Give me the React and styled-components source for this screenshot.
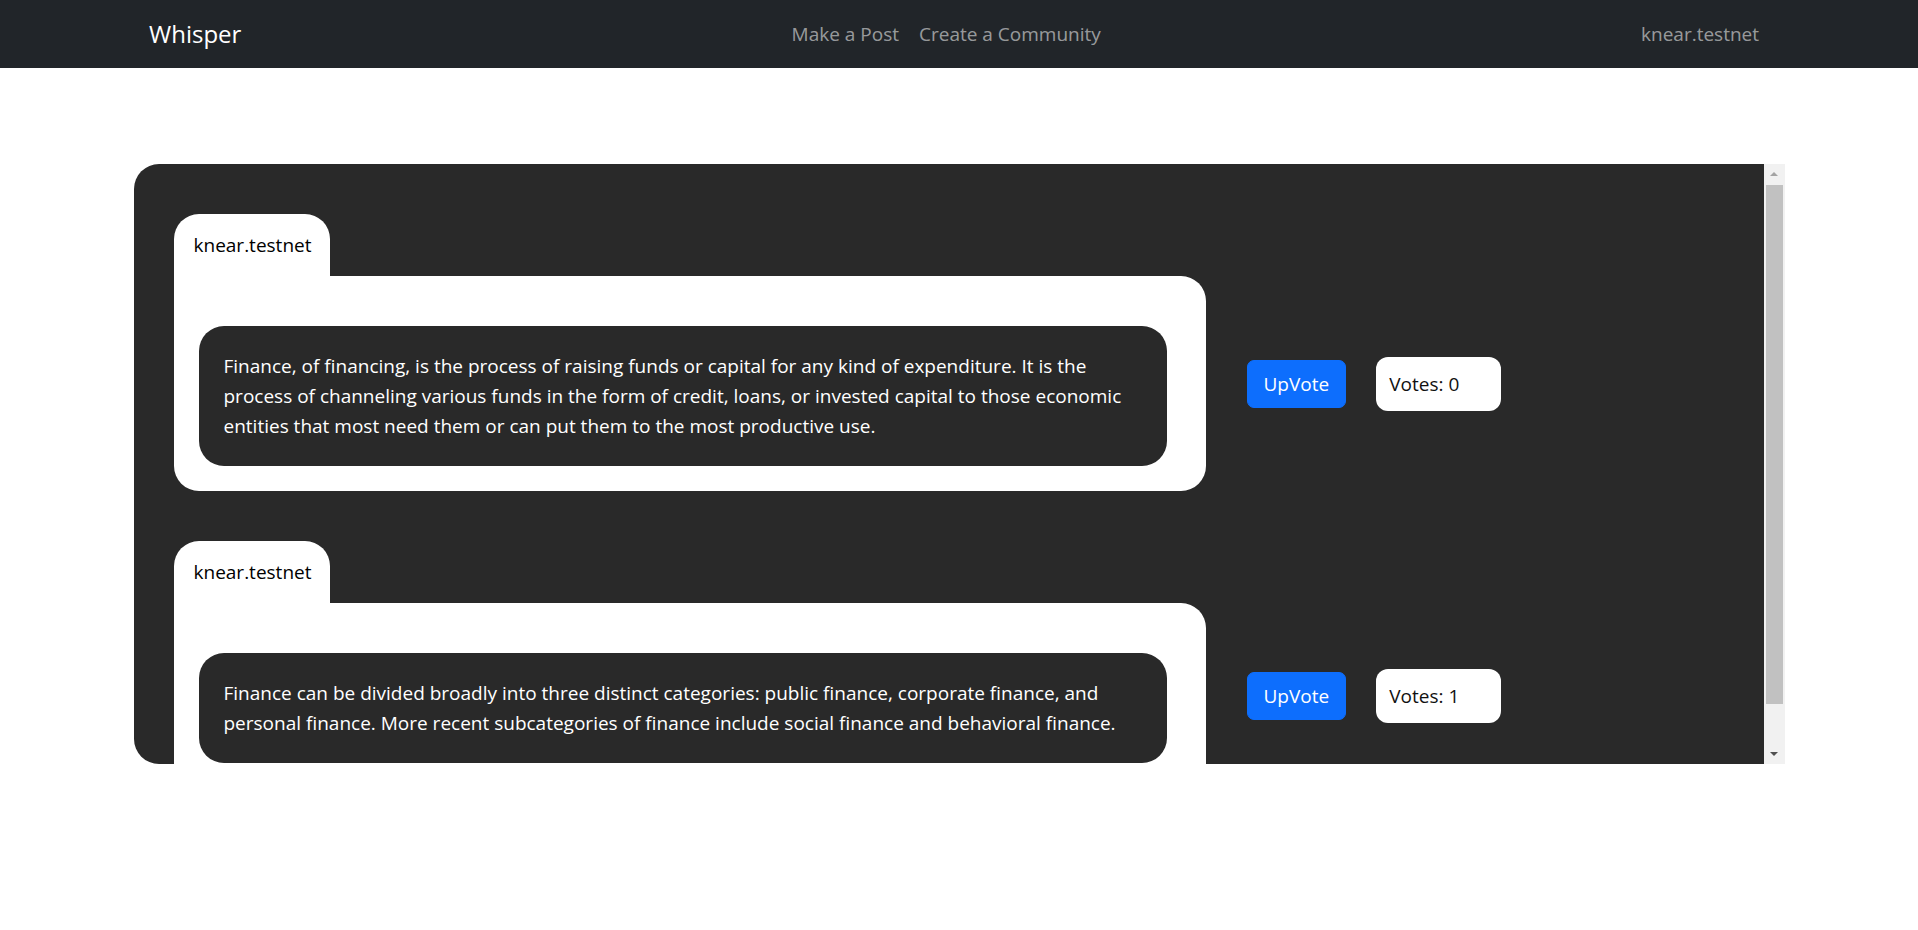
import React from "react";
import styled, { createGlobalStyle } from "styled-components";

const GlobalStyle = createGlobalStyle`
  html, body {
    margin: 0;
    padding: 0;
    background: #ffffff;
    font-family: "Open Sans", "Noto Sans", sans-serif;
    font-size: 19px;
    line-height: 30px;
    color: #212529;
  }
  * { box-sizing: border-box; }
`;

const Navbar = styled.nav`
  height: 68px;
  background: #212529;
`;

const NavInner = styled.div`
  width: 1650px;
  height: 100%;
  margin: 0 auto;
  padding: 0 15px;
  display: flex;
  align-items: center;
`;

const Brand = styled.a`
  color: #ffffff;
  font-size: 24px;
  margin-right: 20px;
  text-decoration: none;
`;

const NavList = styled.div`
  display: flex;
  margin: ${(p) => (p.$center ? "0 auto" : "0")};
`;

const NavLink = styled.a`
  color: rgba(255, 255, 255, 0.55);
  padding: 0 10px;
  text-decoration: none;
`;

const Main = styled.main`
  width: 1651px;
  height: 600px;
  margin: 96px auto 0;
  display: flex;
`;

const Feed = styled.div`
  flex: 1;
  height: 100%;
  background: #292929;
  border-radius: 25px 0 0 25px;
  overflow: hidden;
  padding: 50px 0 22px 40px;
  display: flex;
  flex-direction: column;
  gap: 50px;
`;

const ScrollBar = styled.div`
  width: 21px;
  height: 100%;
  background: #f1f1f1;
  display: flex;
  flex-direction: column;
  flex-shrink: 0;
`;

const ScrollButton = styled.div`
  height: 21px;
  flex-shrink: 0;
  display: flex;
  align-items: center;
  justify-content: center;
`;

const Arrow = styled.span`
  width: 0;
  height: 0;
  border-left: 4px solid transparent;
  border-right: 4px solid transparent;
  ${(p) =>
    p.$down
      ? `border-top: 4px solid #505050; margin-top: 1px;`
      : `border-bottom: 4px solid #a3a3a3; margin-top: -1px;`}
`;

const Track = styled.div`
  flex: 1;
  padding: 0 2px;
  display: flex;
  flex-direction: column;
`;

const Thumb = styled.div`
  height: 519px;
  background: #c1c1c1;
`;

const Post = styled.article`
  display: flex;
  flex-direction: column;
  align-items: flex-start;
  flex-shrink: 0;
`;

const Tab = styled.div`
  height: 62px;
  padding: 0 19px 0 20px;
  display: flex;
  align-items: center;
  background: #ffffff;
  color: #000000;
  font-weight: 500;
  border-radius: 25px 25px 0 0;
`;

const PostRow = styled.div`
  display: flex;
  align-items: center;
`;

const Body = styled.div`
  width: 1032px;
  background: #ffffff;
  border-radius: 0 25px 25px 25px;
  padding: 50px 39px 25px 25px;
`;

const Bubble = styled.p`
  margin: 0;
  background: #292929;
  color: #ffffff;
  border-radius: 25px;
  padding: 25px;
`;

const Actions = styled.div`
  display: flex;
  align-items: center;
  gap: 30px;
  margin-left: 41px;
`;

const UpVote = styled.button`
  font: inherit;
  color: #ffffff;
  background: #0d6efd;
  border: 1px solid #0d6efd;
  border-radius: 7px;
  padding: 8px 16px;
  line-height: 30px;
  cursor: pointer;
`;

const Votes = styled.div`
  width: 125px;
  height: 54px;
  padding: 0 13px;
  display: flex;
  align-items: center;
  background: #ffffff;
  color: #111111;
  border-radius: 12px;
`;

const posts = [
  {
    author: "knear.testnet",
    text: "Finance, of financing, is the process of raising funds or capital for any kind of expenditure. It is the process of channeling various funds in the form of credit, loans, or invested capital to those economic entities that most need them or can put them to the most productive use.",
    votes: 0,
  },
  {
    author: "knear.testnet",
    text: "Finance can be divided broadly into three distinct categories: public finance, corporate finance, and personal finance. More recent subcategories of finance include social finance and behavioral finance.",
    votes: 1,
  },
];

export default function App() {
  return (
    <>
      <GlobalStyle />
      <Navbar>
        <NavInner>
          <Brand href="#">Whisper</Brand>
          <NavList $center>
            <NavLink href="#">Make a Post</NavLink>
            <NavLink href="#">Create a Community</NavLink>
          </NavList>
          <NavList>
            <NavLink href="#">knear.testnet</NavLink>
          </NavList>
        </NavInner>
      </Navbar>
      <Main>
        <Feed>
          {posts.map((p, i) => (
            <Post key={i}>
              <Tab>{p.author}</Tab>
              <PostRow>
                <Body>
                  <Bubble>{p.text}</Bubble>
                </Body>
                <Actions>
                  <UpVote>UpVote</UpVote>
                  <Votes>Votes: {p.votes}</Votes>
                </Actions>
              </PostRow>
            </Post>
          ))}
        </Feed>
        <ScrollBar aria-hidden="true">
          <ScrollButton>
            <Arrow />
          </ScrollButton>
          <Track>
            <Thumb />
          </Track>
          <ScrollButton>
            <Arrow $down />
          </ScrollButton>
        </ScrollBar>
      </Main>
    </>
  );
}
